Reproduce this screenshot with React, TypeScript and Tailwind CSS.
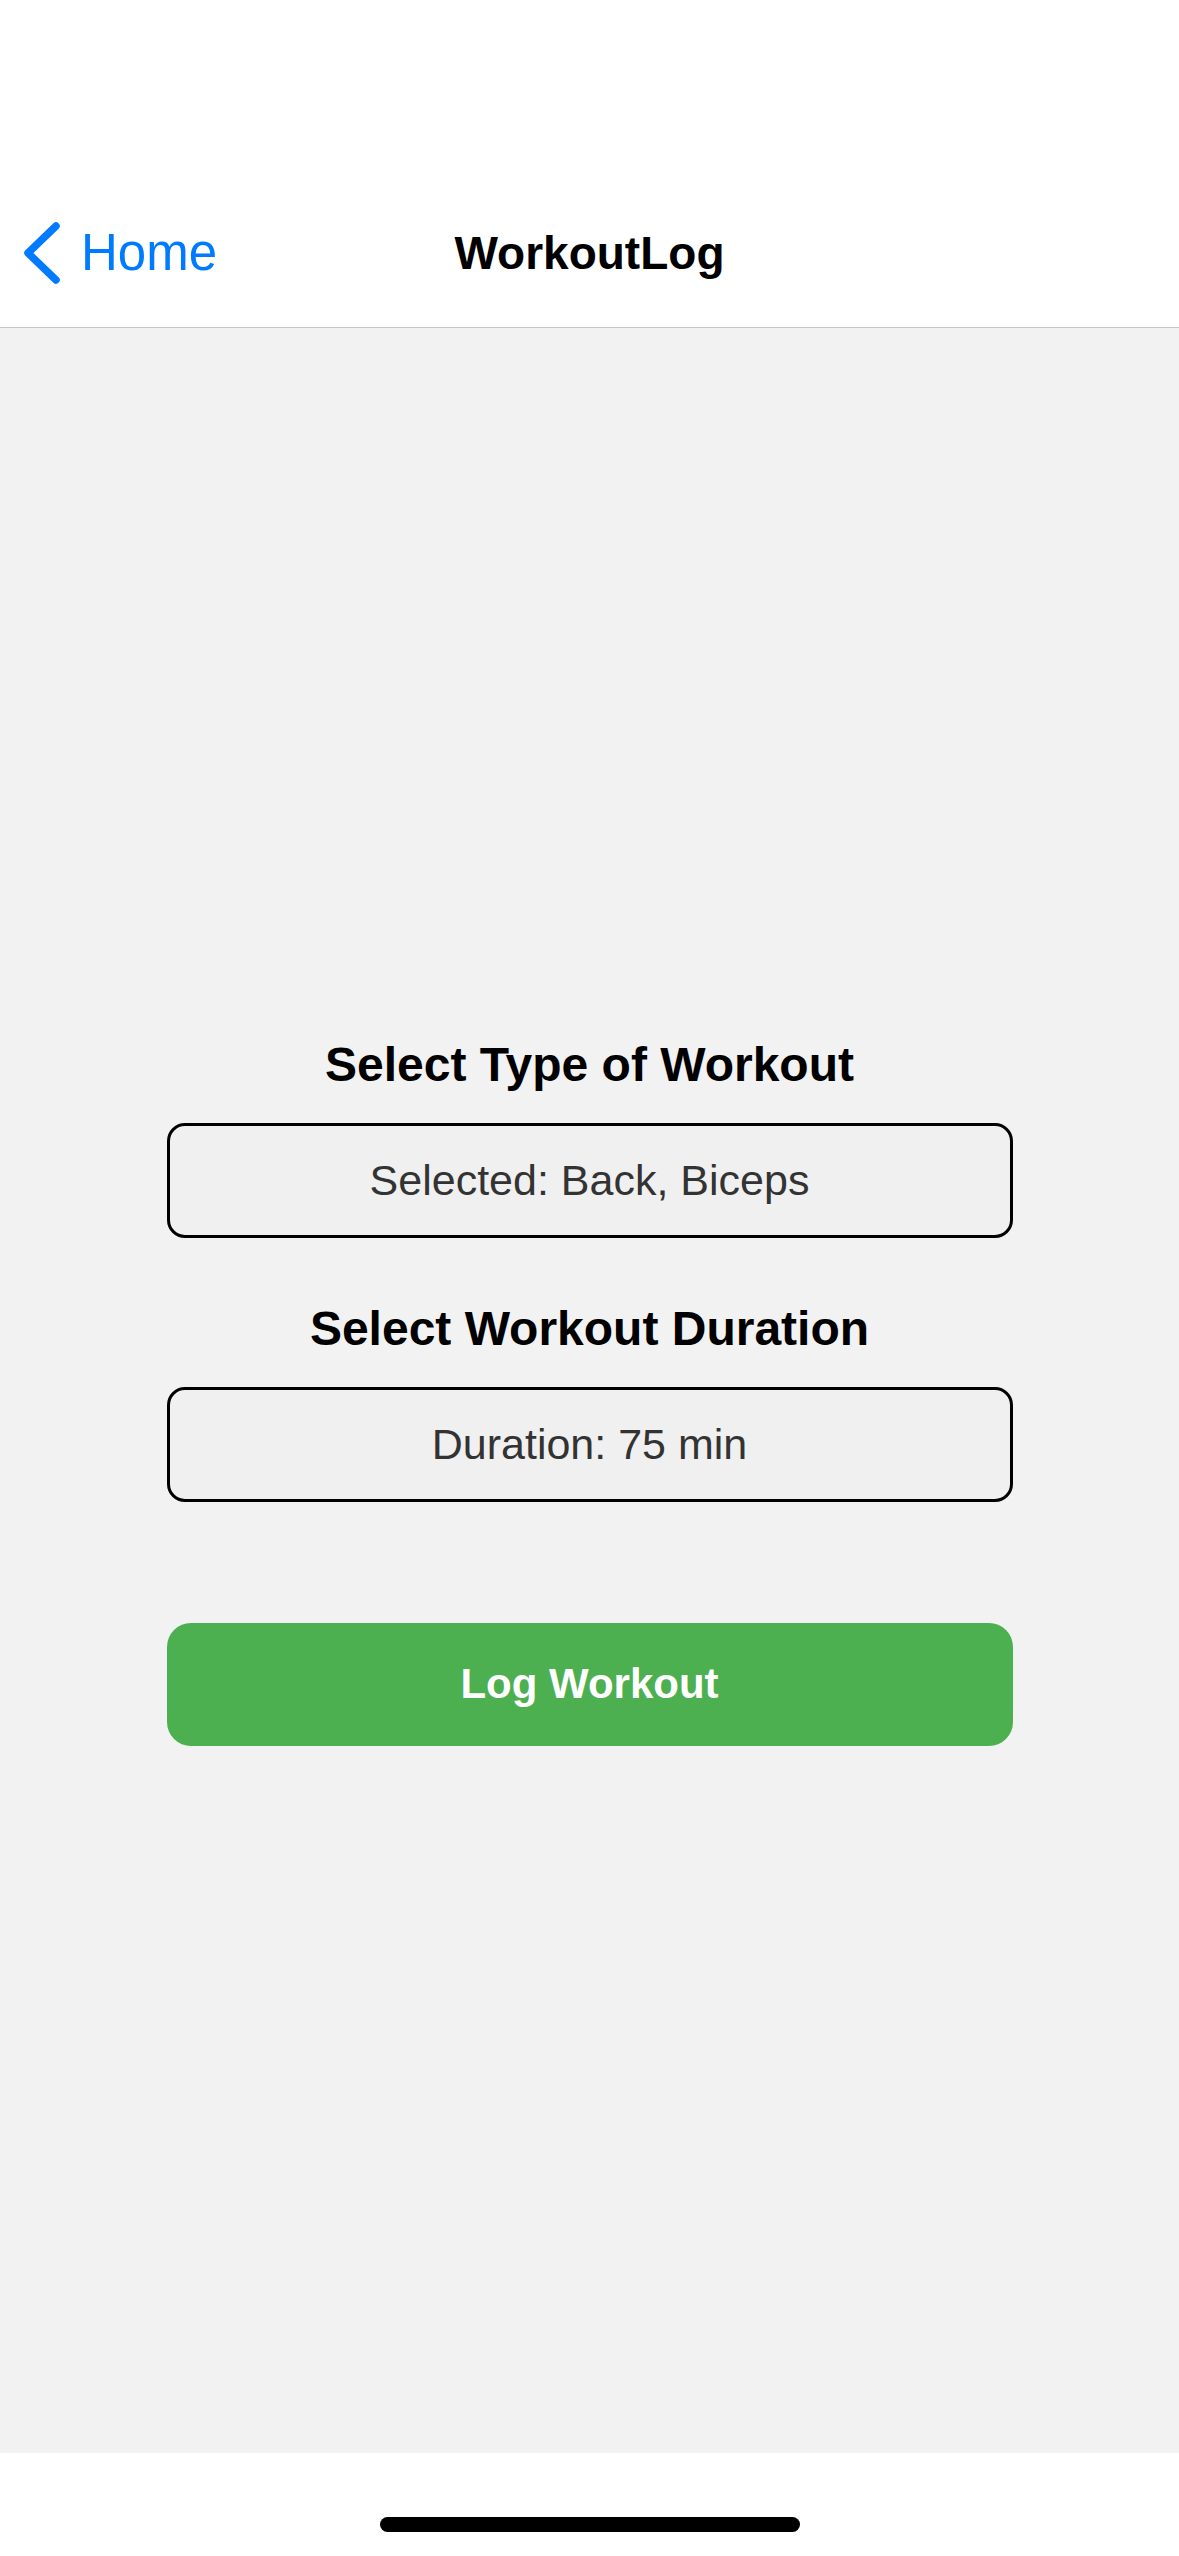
const FONT = "font-['Liberation_Sans',Arial,sans-serif]";

function BackChevron() {
  return (
    <svg width="40" height="66" viewBox="0 0 40 66" fill="none" className="shrink-0">
      <path
        d="M34 6 L6 33 L34 60"
        stroke="#007aff"
        strokeWidth="7.5"
        strokeLinecap="round"
        strokeLinejoin="round"
      />
    </svg>
  );
}

function SelectBox({ text }: { text: string }) {
  return (
    <button className="flex h-[115px] w-full items-center justify-center rounded-[18px] border-[3px] border-black bg-[#f0f0f0]">
      <span className="text-[43px] leading-[50px] text-[#333333]">{text}</span>
    </button>
  );
}

export default function App() {
  return (
    <div className={`flex h-[2556px] w-[1179px] flex-col bg-white ${FONT}`}>
      <header className="flex h-[328px] shrink-0 flex-col border-b border-[#c8c8c8] bg-white">
        <div className="h-[187px]" />
        <div className="grid h-[132px] grid-cols-[1fr_auto_1fr] items-center">
          <div className="flex items-center gap-[19px] pl-[22px]">
            <BackChevron />
            <span className="text-[51px] leading-[60px] text-[#007aff]">Home</span>
          </div>
          <h1 className="text-[46px] font-bold leading-[60px] text-black">WorkoutLog</h1>
          <div />
        </div>
      </header>

      <main className="flex flex-1 flex-col items-center justify-center bg-[#f2f2f2]">
        <div className="flex w-[846px] flex-col items-center">
          <h2 className="mb-[29px] text-[48px] font-bold leading-[58px] text-black">
            Select Type of Workout
          </h2>
          <SelectBox text="Selected: Back, Biceps" />
          <h2 className="mt-[62px] mb-[29px] text-[48px] font-bold leading-[58px] text-black">
            Select Workout Duration
          </h2>
          <SelectBox text="Duration: 75 min" />
          <button className="mt-[121px] flex h-[123px] w-full items-center justify-center rounded-[24px] bg-[#4caf50]">
            <span className="text-[42px] font-bold leading-[50px] text-white">Log Workout</span>
          </button>
        </div>
      </main>

      <footer className="flex h-[103px] shrink-0 justify-center bg-white pt-[64px]">
        <div className="h-[15px] w-[420px] rounded-full bg-black" />
      </footer>
    </div>
  );
}
